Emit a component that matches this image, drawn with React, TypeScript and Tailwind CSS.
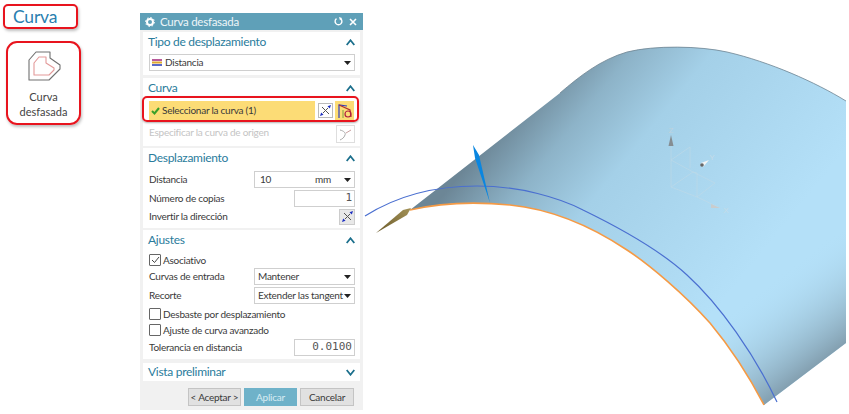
import React from "react";

const Chevron = ({ down }: { down?: boolean }) => (
  <svg width="9" height="7" viewBox="0 0 9 7" className="shrink-0">
    <path d={down ? "M0.7 1 L4.5 5.7 L8.3 1" : "M0.7 6 L4.5 1.3 L8.3 6"} fill="none" stroke="#1b6f8c" strokeWidth="1.8" />
  </svg>
);

const Caret = () => (
  <svg width="7" height="4" viewBox="0 0 7 4" className="shrink-0">
    <path d="M0 0 H7 L3.5 4 Z" fill="#222" />
  </svg>
);

const Flip = () => (
  <svg width="13" height="13" viewBox="0 0 13 13">
    <path d="M3 3 L10 10" stroke="#555" strokeWidth="1" />
    <path d="M9 4 L4 9" stroke="#555" strokeWidth="1" />
    <path d="M1 12 L2.2 8.5 L4.5 10.8 Z" fill="#1d2fc0" />
    <path d="M12 1 L10.8 4.5 L8.5 2.2 Z" fill="#1d2fc0" />
  </svg>
);

const Section = ({ title, down, h, children }: { title: string; down?: boolean; h: string; children?: React.ReactNode }) => (
  <div className={`bg-white mx-[3px] px-[5px] ${h}`}>
    <div className={`flex items-center justify-between ${down ? "h-[18px]" : "h-[20px]"}`}>
      <span className="text-[12px] leading-none tracking-[-0.3px] text-[#2a7c9c]">{title}</span>
      <Chevron down={down} />
    </div>
    {children}
  </div>
);

const Select = ({ text, className }: { text: string; className: string }) => (
  <div className={`h-[17px] bg-white border border-[#cfcfcf] flex items-center justify-between pl-[3px] pr-[3px] ${className}`}>
    <span className="text-[10px] text-[#3a3a3a] whitespace-nowrap">{text}</span>
    <Caret />
  </div>
);

const Row = ({ label, className, children }: { label: string; className?: string; children?: React.ReactNode }) => (
  <div className={`flex items-center justify-between h-[17px] ml-[1px] ${className ?? ""}`}>
    <span className="text-[10px] text-[#3a3a3a] whitespace-nowrap">{label}</span>
    {children}
  </div>
);

const Check = ({ label, on, className }: { label: string; on?: boolean; className?: string }) => (
  <div className={`flex items-center gap-[2px] h-[12px] ml-[1px] ${className ?? ""}`}>
    <div className="w-[12px] h-[12px] border border-[#666] rounded-[1px] bg-white flex items-center justify-center">
      {on && (
        <svg width="9" height="8" viewBox="0 0 9 8">
          <path d="M1 4 L3.5 6.5 L8 1" fill="none" stroke="#444" strokeWidth="1" />
        </svg>
      )}
    </div>
    <span className="text-[10px] text-[#3a3a3a] whitespace-nowrap">{label}</span>
  </div>
);

const SURFACE =
  "M410 210 L560 93 C580 76 600 60 627 52 C655 45 700 46 727 52 C770 62 815 82 846 101 L846 343 L764 405 C750 378 730 347 710 323 C685 295 650 265 627 250 C600 232 560 210 510 205 C470 201 440 203 410 210 Z";

const Scene = () => (
  <svg width="486" height="414" viewBox="363 0 486 414" className="shrink-0">
    <defs>
      <linearGradient id="surf" gradientUnits="userSpaceOnUse" x1="480" y1="150" x2="700" y2="329">
        <stop offset="0" stopColor="#6c8696" />
        <stop offset="0.2" stopColor="#8db3c8" />
        <stop offset="0.42" stopColor="#a4d0e8" />
        <stop offset="1" stopColor="#b4e0f8" />
      </linearGradient>
      <linearGradient id="edge" gradientUnits="userSpaceOnUse" x1="806" y1="375" x2="748" y2="298">
        <stop offset="0" stopColor="#7f9aaa" stopOpacity="0.95" />
        <stop offset="1" stopColor="#b4e0f8" stopOpacity="0" />
      </linearGradient>
      <linearGradient id="brown" gradientUnits="userSpaceOnUse" x1="376" y1="233" x2="411" y2="208">
        <stop offset="0" stopColor="#6b5a2a" />
        <stop offset="1" stopColor="#a39257" />
      </linearGradient>
    </defs>
    <path d={SURFACE} fill="url(#surf)" />
    <path d={SURFACE} fill="url(#edge)" />
    <path d="M560 93 C580 76 600 60 627 52 C655 45 700 46 727 52 C770 62 815 82 846 101" fill="none" stroke="#6f8492" strokeWidth="0.8" />
    <path d="M410 210 C440 203 470 201 510 205 C560 210 600 232 627 250 C650 265 685 295 710 323 C730 347 750 378 764 405" fill="none" stroke="#f59a45" strokeWidth="1.6" />
    <path d="M365 216 C395 197 433 186 477 186 C520 186 560 198 583 210 C620 228 660 250 687 275 C720 305 755 355 777 402" fill="none" stroke="#4a6fd0" strokeWidth="1.2" />
    <path d="M473 145 L479 155 L490 203 L475 158 Z" fill="#0a86e0" />
    <path d="M376 233 L403 210 L411 208 L407 215 Z" fill="url(#brown)" />
    <g stroke="#c4dbe6" strokeWidth="0.7" fill="none" opacity="0.75">
      <path d="M671 146 L671 187 L697 197 L715 183 L693 172 L671 160 L690 147 L690 168" />
      <path d="M671 187 L693 172 L697 173 L697 197 L720 208" />
    </g>
    <path d="M671 135 L668.5 146 L673.5 146 Z" fill="#858d92" />
    <path d="M709 160 L701 163 L703 167 Z" fill="#f2f4f5" />
    <circle cx="702" cy="165" r="1.8" fill="#666" />
    <path d="M720 208 L711 204 L711 208 Z" fill="#c9cccd" />
    <text x="671" y="133" fontSize="8" fill="#bfd3de" textAnchor="middle" fontFamily="Liberation Sans">Z</text>
    <text x="712" y="160" fontSize="8" fill="#c5dbe7" textAnchor="middle" fontFamily="Liberation Sans">Y</text>
    <text x="726" y="213" fontSize="8" fill="#c5dbe7" textAnchor="middle" fontFamily="Liberation Sans">X</text>
  </svg>
);

export default function App() {
  return (
    <div className="w-[849px] h-[414px] bg-white flex overflow-hidden" style={{ fontFamily: 'Lato, "Noto Sans", sans-serif' }}>
      <div className="w-[140px] shrink-0 pl-[3px] pt-[4px]">
        <div className="w-[75px] h-[25px] border-2 border-[#e8141e] rounded-[5px] shadow-[1px_2px_3px_rgba(0,0,0,0.25)] pl-[8px] flex items-center">
          <span className="text-[17.5px] leading-none tracking-[-0.2px] text-[#2a7fb0]">Curva</span>
        </div>
        <div className="mt-[12px] ml-[3px] w-[75px] h-[84px] border-2 border-[#e8141e] rounded-[11px] shadow-[1px_2px_3px_rgba(0,0,0,0.25)] flex flex-col items-center pt-[8px]">
          <svg width="34" height="31" viewBox="0 0 34 31" className="ml-[3px]">
            <path d="M22 1 H8 L1 9 V29 H21 L32 18 V14 L22 7 Z" fill="none" stroke="#707070" strokeWidth="1.1" strokeLinejoin="round" />
            <path d="M6 24 V12 L11 6 H18 V12 L26 17 V19 L21 24 Z" fill="none" stroke="#e39a9a" strokeWidth="1.1" strokeLinejoin="round" />
          </svg>
          <span className="mt-[7px] text-[11px] leading-[15px] text-[#444] text-center">Curva<br />desfasada</span>
        </div>
      </div>

      <div className="w-[223px] h-[397px] mt-[13px] shrink-0 bg-[#f1f1f1] flex flex-col tracking-[-0.25px]">
        <div className="h-[17px] bg-[#5fa0b8] flex items-center justify-between pl-[5px] pr-[6px] text-white">
          <div className="flex items-center gap-[5px]">
            <svg width="10" height="10" viewBox="0 0 10 10">
              <circle cx="5" cy="5" r="3" fill="none" stroke="#fff" strokeWidth="2" />
              <circle cx="5" cy="5" r="4.5" fill="none" stroke="#fff" strokeWidth="1" strokeDasharray="1.5 2" />
            </svg>
            <span className="text-[11.5px] leading-none text-[#eef6f9]">Curva desfasada</span>
          </div>
          <div className="flex items-center gap-[6px]">
            <svg width="9" height="9" viewBox="0 0 9 9">
              <path d="M6.5 1.6 A3.4 3.4 0 1 1 2.5 1.6" fill="none" stroke="#fff" strokeWidth="1.4" />
              <path d="M5 0 L8 1 L6 3.5 Z" fill="#fff" />
            </svg>
            <svg width="8" height="8" viewBox="0 0 8 8">
              <path d="M1 1 L7 7 M7 1 L1 7" stroke="#fff" strokeWidth="1.6" />
            </svg>
          </div>
        </div>

        <div className="mt-[2px]">
          <Section title="Tipo de desplazamiento" h="h-[43px]">
            <div className="mt-[2px] ml-[1px] h-[17px] bg-white border border-[#cfcfcf] flex items-center justify-between pl-[2px] pr-[3px]">
              <div className="flex items-center gap-[3px]">
                <svg width="10" height="7" viewBox="0 0 10 7">
                  <rect x="0" y="0" width="10" height="2" fill="#b85a9a" />
                  <rect x="0" y="2.5" width="10" height="2" fill="#e0a830" />
                  <rect x="0" y="5" width="10" height="2" fill="#5a6ac8" />
                </svg>
                <span className="text-[10px] text-[#3a3a3a]">Distancia</span>
              </div>
              <Caret />
            </div>
          </Section>
        </div>

        <div className="mt-[3px]">
          <Section title="Curva" h="h-[68px]">
            <div className="relative mt-[3px] ml-[1px] h-[19px] flex items-center">
              <div className="w-[166px] h-[19px] bg-[#fcdc76] flex items-center pl-[2px] gap-[2px]">
                <svg width="9" height="8" viewBox="0 0 9 8">
                  <path d="M1 4 L3.5 6.5 L8 1" fill="none" stroke="#3aa02a" strokeWidth="2" />
                </svg>
                <span className="text-[10px] text-[#3a3a3a]">Seleccionar la curva (1)</span>
              </div>
              <div className="ml-[3px] w-[15px] h-[15px] bg-white border border-[#bbb] flex items-center justify-center"><Flip /></div>
              <div className="ml-[2px] w-[19px] h-[19px] bg-[#fcdc76] flex items-center justify-center">
                <svg width="17" height="16" viewBox="0 0 17 16">
                  <path d="M3 15 V2 L11 3" fill="none" stroke="#3040c0" strokeWidth="1.2" />
                  <path d="M3 2 L14 7 L15 14" fill="none" stroke="#b03030" strokeWidth="1.2" />
                  <circle cx="12" cy="11" r="3" fill="none" stroke="#b02040" strokeWidth="1.2" />
                  <path d="M7 7 V15" stroke="#80a040" strokeWidth="1" />
                </svg>
              </div>
              <div className="absolute left-[-7px] right-[-4px] top-[-5px] bottom-[-2px] border-2 border-[#e8141e] rounded-[5px] shadow-[0_1px_2px_rgba(0,0,0,0.3)]" />
            </div>
            <div className="mt-[5px] ml-[1px] h-[18px] flex items-center justify-between">
              <span className="text-[10px] text-[#c4c4c4] mb-[3px]">Especificar la curva de origen</span>
              <div className="w-[19px] h-[18px] border border-[#dedede] flex items-center justify-center">
                <svg width="13" height="13" viewBox="0 0 13 13">
                  <path d="M1 2 C5 3 7 5 6 7 C5 10 3 11 1 12" fill="none" stroke="#aaa" strokeWidth="1" />
                  <path d="M7 5 L12 2" stroke="#c9a0a0" strokeWidth="1" />
                </svg>
              </div>
            </div>
          </Section>
        </div>

        <div className="mt-[2px]">
          <Section title="Desplazamiento" h="h-[80px]">
            <Row label="Distancia" className="mt-[3px]">
              <div className="w-[101px] h-[17px] border border-[#cfcfcf] flex items-center pl-[5px] pr-[3px] bg-white">
                <span className="text-[10px] text-[#3a3a3a] w-[55px]">10</span>
                <span className="text-[10px] text-[#3a3a3a] flex-1">mm</span>
                <Caret />
              </div>
            </Row>
            <Row label="Número de copias" className="mt-[2px]">
              <div className="w-[61px] h-[17px] border border-[#cfcfcf] flex items-center justify-end pr-[2px] bg-white">
                <span className="text-[11px] tracking-normal text-[#555]" style={{ fontFamily: '"DejaVu Sans Mono", monospace' }}>1</span>
              </div>
            </Row>
            <Row label="Invertir la dirección" className="mt-[1px]">
              <div className="w-[16px] h-[16px] bg-[#e8e8e8] border border-[#ccc] flex items-center justify-center"><Flip /></div>
            </Row>
          </Section>
        </div>

        <div className="mt-[2px]">
          <Section title="Ajustes" h="h-[129px]">
            <Check label="Asociativo" on className="mt-[4px]" />
            <Row label="Curvas de entrada" className="mt-[2px]">
              <Select text="Mantener" className="w-[101px]" />
            </Row>
            <Row label="Recorte" className="mt-[2px]">
              <Select text="Extender las tangent" className="w-[101px]" />
            </Row>
            <Check label="Desbaste por desplazamiento" className="mt-[4px]" />
            <Check label="Ajuste de curva avanzado" className="mt-[4px]" />
            <Row label="Tolerancia en distancia" className="mt-[3px]">
              <div className="w-[61px] h-[17px] border border-[#cfcfcf] flex items-center justify-end pr-[2px] bg-white">
                <span className="text-[11px] tracking-normal text-[#555]" style={{ fontFamily: '"DejaVu Sans Mono", monospace' }}>0.0100</span>
              </div>
            </Row>
          </Section>
        </div>

        <div className="mt-[4px]">
          <Section title="Vista preliminar" down h="h-[18px]" />
        </div>

        <div className="mt-[7px] flex justify-end gap-[3px] pr-[9px]">
          <button className="w-[53px] h-[18px] bg-[#e1e1e1] border border-[#c4c4c4] text-[10px] leading-none text-[#3a3a3a]">&lt; Aceptar &gt;</button>
          <button className="w-[53px] h-[18px] bg-[#6fb2c9] text-[10px] leading-none text-[#d8ecf3]">Aplicar</button>
          <button className="w-[54px] h-[18px] bg-[#e1e1e1] border border-[#c4c4c4] text-[10px] leading-none text-[#3a3a3a]">Cancelar</button>
        </div>
      </div>
      <Scene />
    </div>
  );
}
